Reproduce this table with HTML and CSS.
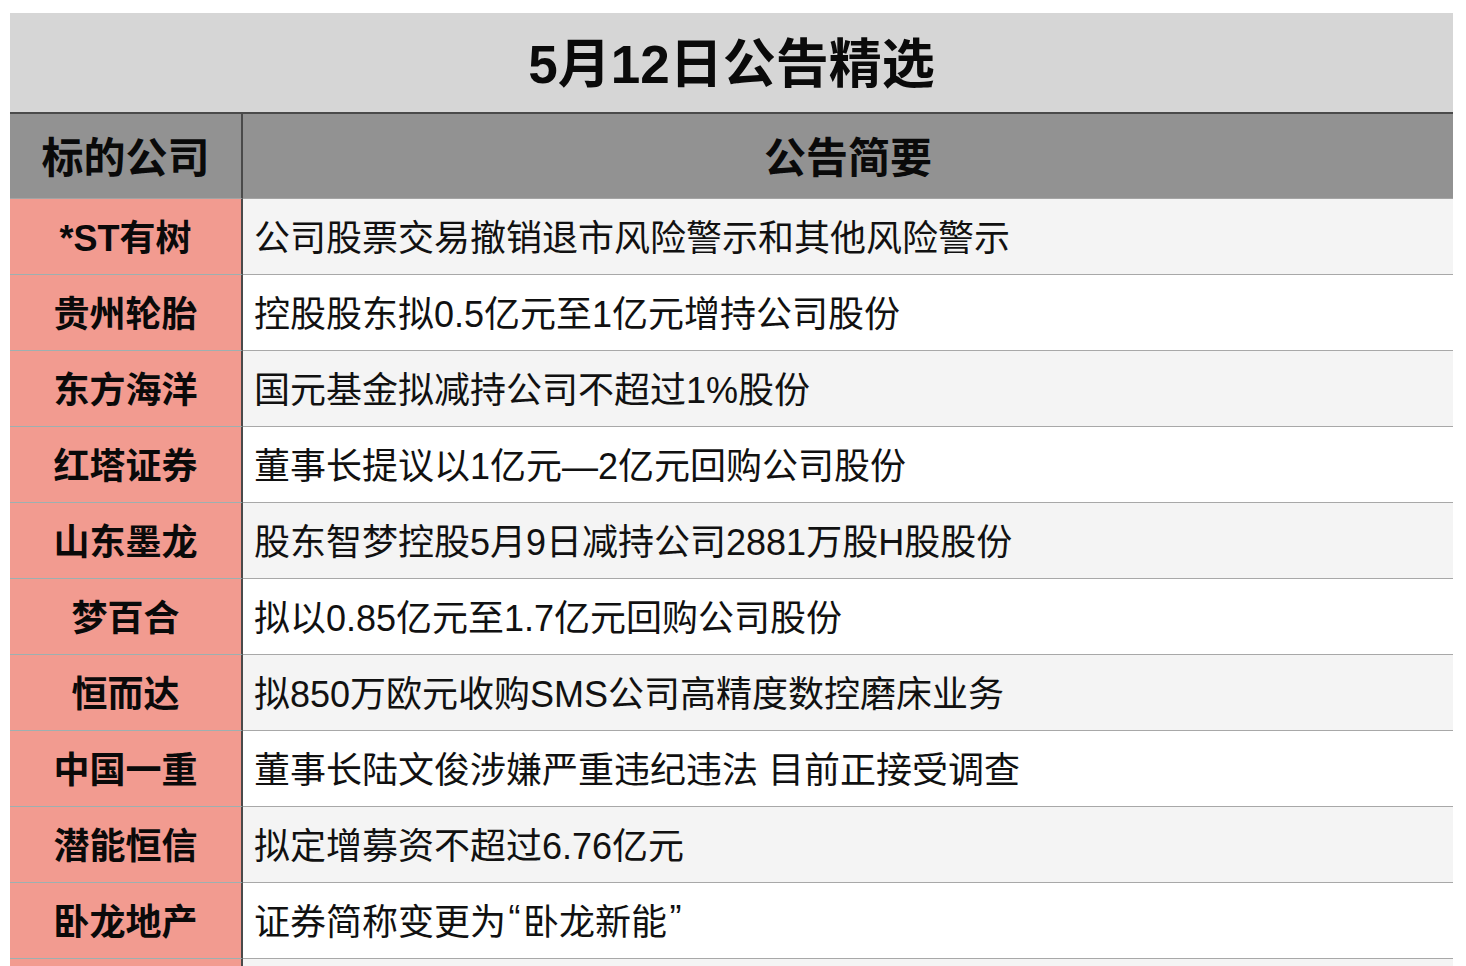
FILE: index.html
```html
<!DOCTYPE html>
<html lang="zh-CN">
<head>
<meta charset="utf-8">
<title>5月12日公告精选</title>
<link rel="stylesheet" href="styles.css">
</head>
<body>
<div class="sheet">
  <div class="title">5月12日公告精选</div>
  <div class="row head">
    <div class="name">标的公司</div>
    <div class="desc">公告简要</div>
  </div>
  <div class="row alt"><div class="name">*ST有树</div><div class="desc">公司股票交易撤销退市风险警示和其他风险警示</div></div>
  <div class="row"><div class="name">贵州轮胎</div><div class="desc">控股股东拟0.5亿元至1亿元增持公司股份</div></div>
  <div class="row alt"><div class="name">东方海洋</div><div class="desc">国元基金拟减持公司不超过1%股份</div></div>
  <div class="row"><div class="name">红塔证券</div><div class="desc">董事长提议以1亿元—2亿元回购公司股份</div></div>
  <div class="row alt"><div class="name">山东墨龙</div><div class="desc">股东智梦控股5月9日减持公司2881万股H股股份</div></div>
  <div class="row"><div class="name">梦百合</div><div class="desc">拟以0.85亿元至1.7亿元回购公司股份</div></div>
  <div class="row alt"><div class="name">恒而达</div><div class="desc">拟850万欧元收购SMS公司高精度数控磨床业务</div></div>
  <div class="row"><div class="name">中国一重</div><div class="desc">董事长陆文俊涉嫌严重违纪违法 目前正接受调查</div></div>
  <div class="row alt"><div class="name">潜能恒信</div><div class="desc">拟定增募资不超过6.76亿元</div></div>
  <div class="row"><div class="name">卧龙地产</div><div class="desc">证券简称变更为<span class="q">“</span>卧龙新能<span class="q">”</span></div></div>
  <div class="row alt"><div class="name"></div><div class="desc"></div></div>
</div>
</body>
</html>
```

FILE: styles.css
```css
html, body {
  margin: 0;
  padding: 0;
  overflow: hidden;
  background: #ffffff;
}
body {
  font-family: "Liberation Sans", "Noto Sans CJK SC", sans-serif;
  color: #111111;
}
.sheet {
  margin: 13px 0 0 10px;
  width: 1443px;
}
.title {
  box-sizing: border-box;
  height: 101px;
  padding-bottom: 6px;
  background: #d6d6d6;
  border-bottom: 2px solid #4a4a4a;
  display: flex;
  align-items: center;
  justify-content: center;
  font-size: 53px;
  font-weight: 700;
  color: #0a0a0a;
}
.row {
  display: grid;
  grid-template-columns: 233px 1fr;
  height: 76px;
}
.name {
  box-sizing: border-box;
  padding-bottom: 4px;
  background: #f29b90;
  border-right: 2px solid #4a4a4a;
  border-bottom: 1px solid #9db0b0;
  display: flex;
  align-items: center;
  justify-content: center;
  font-size: 36px;
  font-weight: 700;
  color: #0a0a0a;
}
.desc {
  box-sizing: border-box;
  padding-bottom: 4px;
  border-bottom: 1px solid #a8a8a8;
  display: flex;
  align-items: center;
  padding-left: 11px;
  font-size: 36px;
  color: #111111;
  white-space: nowrap;
}
.q {
  display: inline-block;
  width: 17px;
  text-align: center;
}
.row.alt .desc {
  background: #f4f4f4;
}
.row.head {
  height: 85px;
}
.row.head .name,
.row.head .desc {
  background: #929292;
  border-bottom: 1px solid #a4a4a4;
  font-size: 42px;
  font-weight: 700;
  color: #0a0a0a;
}
.row.head .desc {
  justify-content: center;
  padding-left: 0;
}
```
